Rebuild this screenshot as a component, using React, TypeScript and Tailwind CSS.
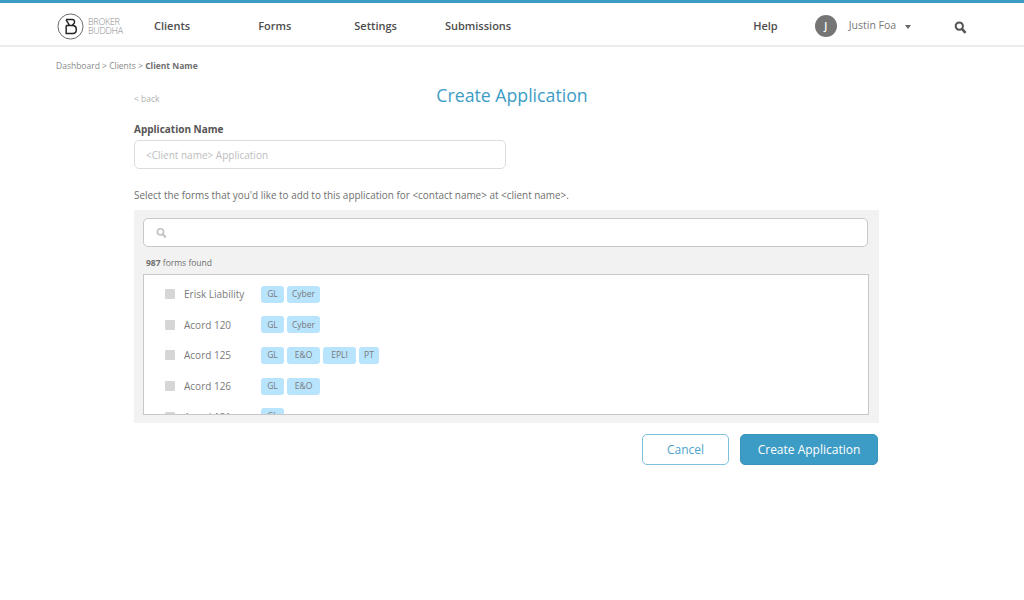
const forms = [
  { name: "Erisk Liability", tags: ["GL", "Cyber"] },
  { name: "Acord 120", tags: ["GL", "Cyber"] },
  { name: "Acord 125", tags: ["GL", "E&O", "EPLI", "PT"] },
  { name: "Acord 126", tags: ["GL", "E&O"] },
  { name: "Acord 131", tags: ["GL"] },
];

const tagWidths: Record<string, string> = {
  GL: "w-[23px]",
  Cyber: "w-[33px]",
  "E&O": "w-[33px]",
  EPLI: "w-[33px]",
  PT: "w-[20px]",
};

function SearchIcon({ className }: { className: string }) {
  return (
    <svg viewBox="0 0 14 14" className={className} fill="none" stroke="currentColor">
      <circle cx="5.7" cy="5.5" r="3.9" strokeWidth="2.2" />
      <path d="M8.6 8.6 L12.4 12.8" strokeWidth="2.8" />
    </svg>
  );
}

function Logo() {
  return (
    <div className="w-[66px] flex items-center">
      <svg viewBox="0 0 28 28" className="w-[27px] h-[27px] shrink-0" fill="none" stroke="#222">
        <circle cx="14" cy="14" r="13" strokeWidth="0.7" />
        <path
          d="M9.3 6.8 H16 C18.5 6.8 19 10 17 11.5 L15.5 13 M9.5 13 H17 C19.5 13.5 20 15 20 17 C20 20 18.5 21.2 16.5 21.2 H9.5 V13 M9.3 6.8 L12.8 12.5"
          strokeWidth="1.5"
        />
      </svg>
      <div className="ml-[4px] text-[9px] leading-[9px] font-light text-[#8a8a8a] tracking-[-0.3px]">
        <div>BROKER</div>
        <div>BUDDHA</div>
      </div>
    </div>
  );
}

export default function App() {
  return (
    <div className="w-[1024px] h-[600px] bg-white overflow-hidden text-[#6f6f6f] font-['Open_Sans',sans-serif]">
      <header className="h-[47px] border-t-[3px] border-b-2 border-t-[#3d9cc5] border-b-[#ececec] flex items-center pl-[57px] pt-[4px] text-[11px] font-semibold text-[#4d4d4d]">
        <Logo />
        <a className="ml-[31px]">Clients</a>
        <a className="ml-[68px]">Forms</a>
        <a className="ml-[63px]">Settings</a>
        <a className="ml-[48px]">Submissions</a>
        <a className="ml-[242px]">Help</a>
        <div className="ml-[37px] w-[22px] h-[22px] rounded-full bg-[#757575] text-white text-[10px] flex items-center justify-center">J</div>
        <span className="ml-[12px] text-[10.5px] font-normal text-[#777]">Justin Foa</span>
        <span className="ml-[9px] mt-[2px] w-0 h-0 border-x-[3.5px] border-x-transparent border-t-[4px] border-t-[#666]" />
        <SearchIcon className="ml-[43px] mt-[2px] w-[13px] h-[15px] text-[#555]" />
      </header>

      <nav className="ml-[56px] mt-[13px] text-[8.5px] leading-[12px] text-[#8a8a8a]">
        Dashboard &gt; Clients &gt; <b className="font-bold text-[#707070]">Client Name</b>
      </nav>

      <main className="w-[745px] ml-[134px]">
        <div className="relative h-[30px] mt-[8px] pl-[11px] flex items-center justify-center">
          <a className="absolute left-0 top-[13px] text-[8.5px] leading-[12px] text-[#b0b0b0]">&lt; back</a>
          <h1 className="text-[17.7px] leading-[24px] text-[#3d9cc5]">Create Application</h1>
        </div>

        <label className="block mt-[12px] text-[10px] leading-[14px] font-bold text-[#555]">Application Name</label>
        <div className="mt-[4px] w-[372px] h-[29px] border border-[#dcdcdc] rounded-[5px] pl-[11px] pt-[1px] flex items-center text-[10px] text-[#bdbdbd]">
          &lt;Client name&gt; Application
        </div>

        <p className="mt-[19px] text-[9.93px] leading-[14px] text-[#6f6f6f]">
          Select the forms that you'd like to add to this application for &lt;contact name&gt; at &lt;client name&gt;.
        </p>

        <section className="mt-[8px] h-[213px] bg-[#f2f2f2] pt-[8px] pl-[9px] pr-[11px]">
          <div className="h-[29px] bg-white border border-[#c8c8c8] rounded-[5px] pl-[12px] flex items-center">
            <SearchIcon className="w-[11px] h-[12px] text-[#c4c4c4]" />
          </div>
          <div className="mt-[10px] ml-[3px] text-[8.5px] leading-[12px] text-[#6f6f6f]">
            <b className="font-bold">987</b> forms found
          </div>
          <div className="mt-[5px] h-[141px] w-[726px] bg-white border border-[#c8c8c8] overflow-hidden pt-[4px] pl-[21px]">
            {forms.map((form) => (
              <div key={form.name} className="h-[30.6px] flex items-center">
                <span className="w-[10px] h-[10px] bg-[#d6d6d6] rounded-[1px]" />
                <span className="ml-[9px] w-[77px] text-[10px] leading-[14px] text-[#7a7a7a] whitespace-nowrap">{form.name}</span>
                <div className="flex gap-[3px]">
                  {form.tags.map((tag) => (
                    <span
                      key={tag}
                      className={`${tagWidths[tag]} h-[17px] bg-[#b8e4fd] rounded-[3px] flex items-center justify-center text-[8.5px] text-[#7a7a7a]`}
                    >
                      {tag}
                    </span>
                  ))}
                </div>
              </div>
            ))}
          </div>
        </section>

        <div className="mt-[11px] flex justify-end gap-[11px] pr-[1px]">
          <button className="w-[87px] h-[31px] border border-[#7fc0dd] rounded-[5px] text-[12px] text-[#4ba3ca]">Cancel</button>
          <button className="w-[138px] h-[31px] bg-[#3d9cc5] border border-[#3a93ba] rounded-[5px] text-[12px] text-white">Create Application</button>
        </div>
      </main>
    </div>
  );
}
